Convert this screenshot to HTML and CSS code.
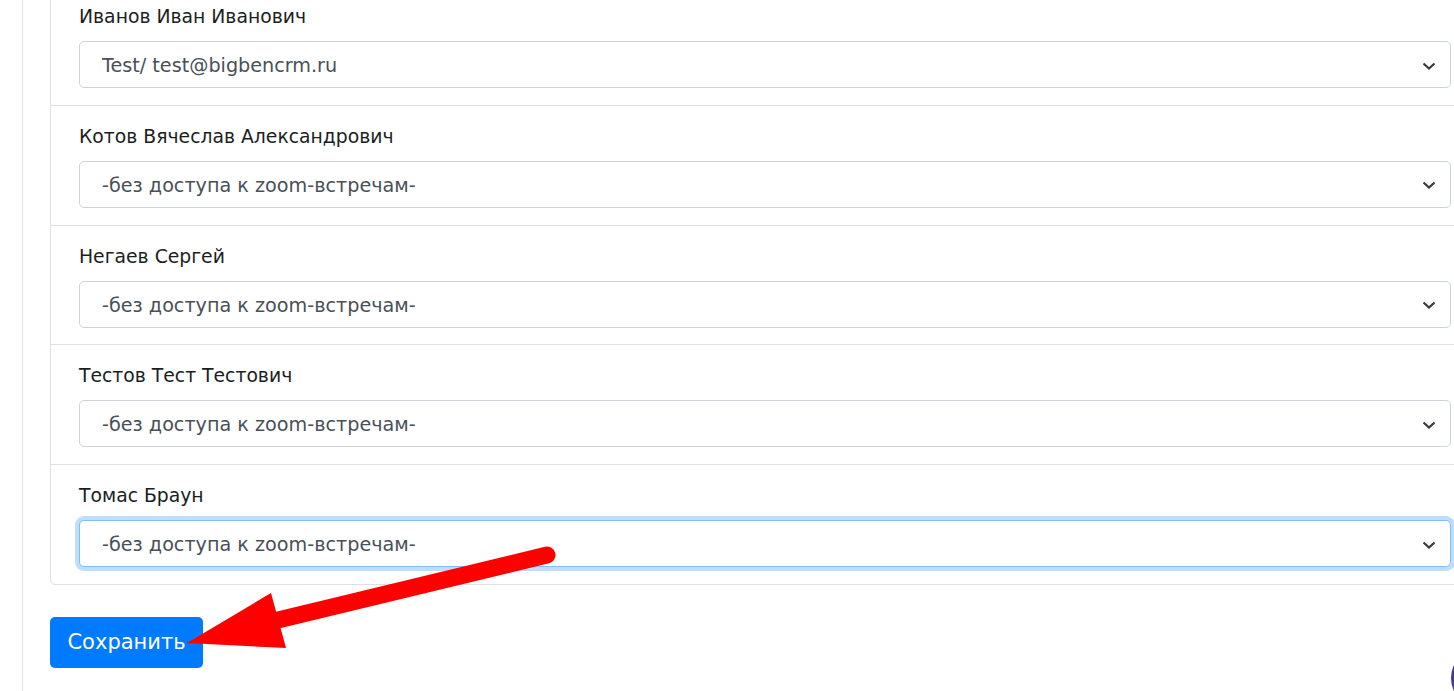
FILE: index.html
```html
<!DOCTYPE html>
<html lang="ru">
<head>
<meta charset="utf-8">
<title>Zoom</title>
<link rel="stylesheet" href="styles.css">
</head>
<body>
<div class="page">
  <div class="rail"></div>
  <main class="content">
    <div class="card">
      <div class="row">
        <label class="lbl">Иванов Иван Иванович</label>
        <div class="sel"><span>Test/ test@bigbencrm.ru</span><svg class="chev" viewBox="0 0 14 10" width="14" height="10"><path d="M1.5 2.5 L7 7.5 L12.5 2.5" fill="none" stroke="#343a40" stroke-width="2.2"/></svg></div>
      </div>
      <div class="row">
        <label class="lbl">Котов Вячеслав Александрович</label>
        <div class="sel"><span>-без доступа к zoom-встречам-</span><svg class="chev" viewBox="0 0 14 10" width="14" height="10"><path d="M1.5 2.5 L7 7.5 L12.5 2.5" fill="none" stroke="#343a40" stroke-width="2.2"/></svg></div>
      </div>
      <div class="row">
        <label class="lbl">Негаев Сергей</label>
        <div class="sel"><span>-без доступа к zoom-встречам-</span><svg class="chev" viewBox="0 0 14 10" width="14" height="10"><path d="M1.5 2.5 L7 7.5 L12.5 2.5" fill="none" stroke="#343a40" stroke-width="2.2"/></svg></div>
      </div>
      <div class="row">
        <label class="lbl">Тестов Тест Тестович</label>
        <div class="sel"><span>-без доступа к zoom-встречам-</span><svg class="chev" viewBox="0 0 14 10" width="14" height="10"><path d="M1.5 2.5 L7 7.5 L12.5 2.5" fill="none" stroke="#343a40" stroke-width="2.2"/></svg></div>
      </div>
      <div class="row last">
        <label class="lbl">Томас Браун</label>
        <div class="sel focus"><span>-без доступа к zoom-встречам-</span><svg class="chev" viewBox="0 0 14 10" width="14" height="10"><path d="M1.5 2.5 L7 7.5 L12.5 2.5" fill="none" stroke="#343a40" stroke-width="2.2"/></svg></div>
      </div>
    </div>
    <button class="btn">Сохранить</button>
  </main>
</div>
<svg class="arrow" width="1454" height="691" viewBox="0 0 1454 691">
  <line x1="547" y1="555" x2="278" y2="620" stroke="#ff0000" stroke-width="17" stroke-linecap="round"/>
  <polygon points="271,593 286,648 187,643" fill="#ff0000"/>
</svg>
<div class="widget"></div>
</body>
</html>
```
FILE: styles.css
```css
html, body {
  margin: 0;
  padding: 0;
  background: #fff;
  overflow: hidden;
  width: 1454px;
  height: 691px;
}
body {
  font-family: "DejaVu Sans", Verdana, sans-serif;
  color: #212529;
  position: relative;
}
.page {
  display: flex;
  margin-top: -15px;
}
.rail {
  width: 22px;
  flex: 0 0 22px;
  border-right: 1px solid #e3e3e3;
  min-height: 760px;
}
.content {
  margin-left: 27px;
  flex: 0 0 1430px;
}
.card {
  width: 1428px;
  border: 1px solid #dfdfdf;
  border-radius: 5px;
}
.row {
  padding: 16px 28px 16.75px;
  border-bottom: 1px solid #dfdfdf;
}
.row.last {
  border-bottom: none;
}
.lbl {
  display: block;
  font-size: 18.8px;
  line-height: 30px;
  margin-bottom: 9px;
  color: #1b1e21;
}
.sel {
  box-sizing: border-box;
  height: 47px;
  border: 1px solid #ced4da;
  border-radius: 5px;
  display: flex;
  align-items: center;
  justify-content: space-between;
  padding: 2px 14px 0 22px;
  font-size: 19.2px;
  color: #495057;
  background: #fff;
}
.sel.focus {
  border-color: #80bdff;
  box-shadow: 0 0 0 4px rgba(0, 123, 255, 0.25);
}
.chev {
  display: block;
}
.btn {
  margin-top: 32px;
  height: 51px;
  width: 153px;
  border: none;
  border-radius: 5px;
  background: #007bff;
  color: #fff;
  font-family: "DejaVu Sans", Verdana, sans-serif;
  font-size: 21px;
  padding: 0;
}
.arrow {
  position: absolute;
  left: 0;
  top: 0;
  pointer-events: none;
}
.widget {
  position: absolute;
  left: 1451px;
  top: 648px;
  width: 60px;
  height: 60px;
  border-radius: 50%;
  background: #46379a;
}
```
